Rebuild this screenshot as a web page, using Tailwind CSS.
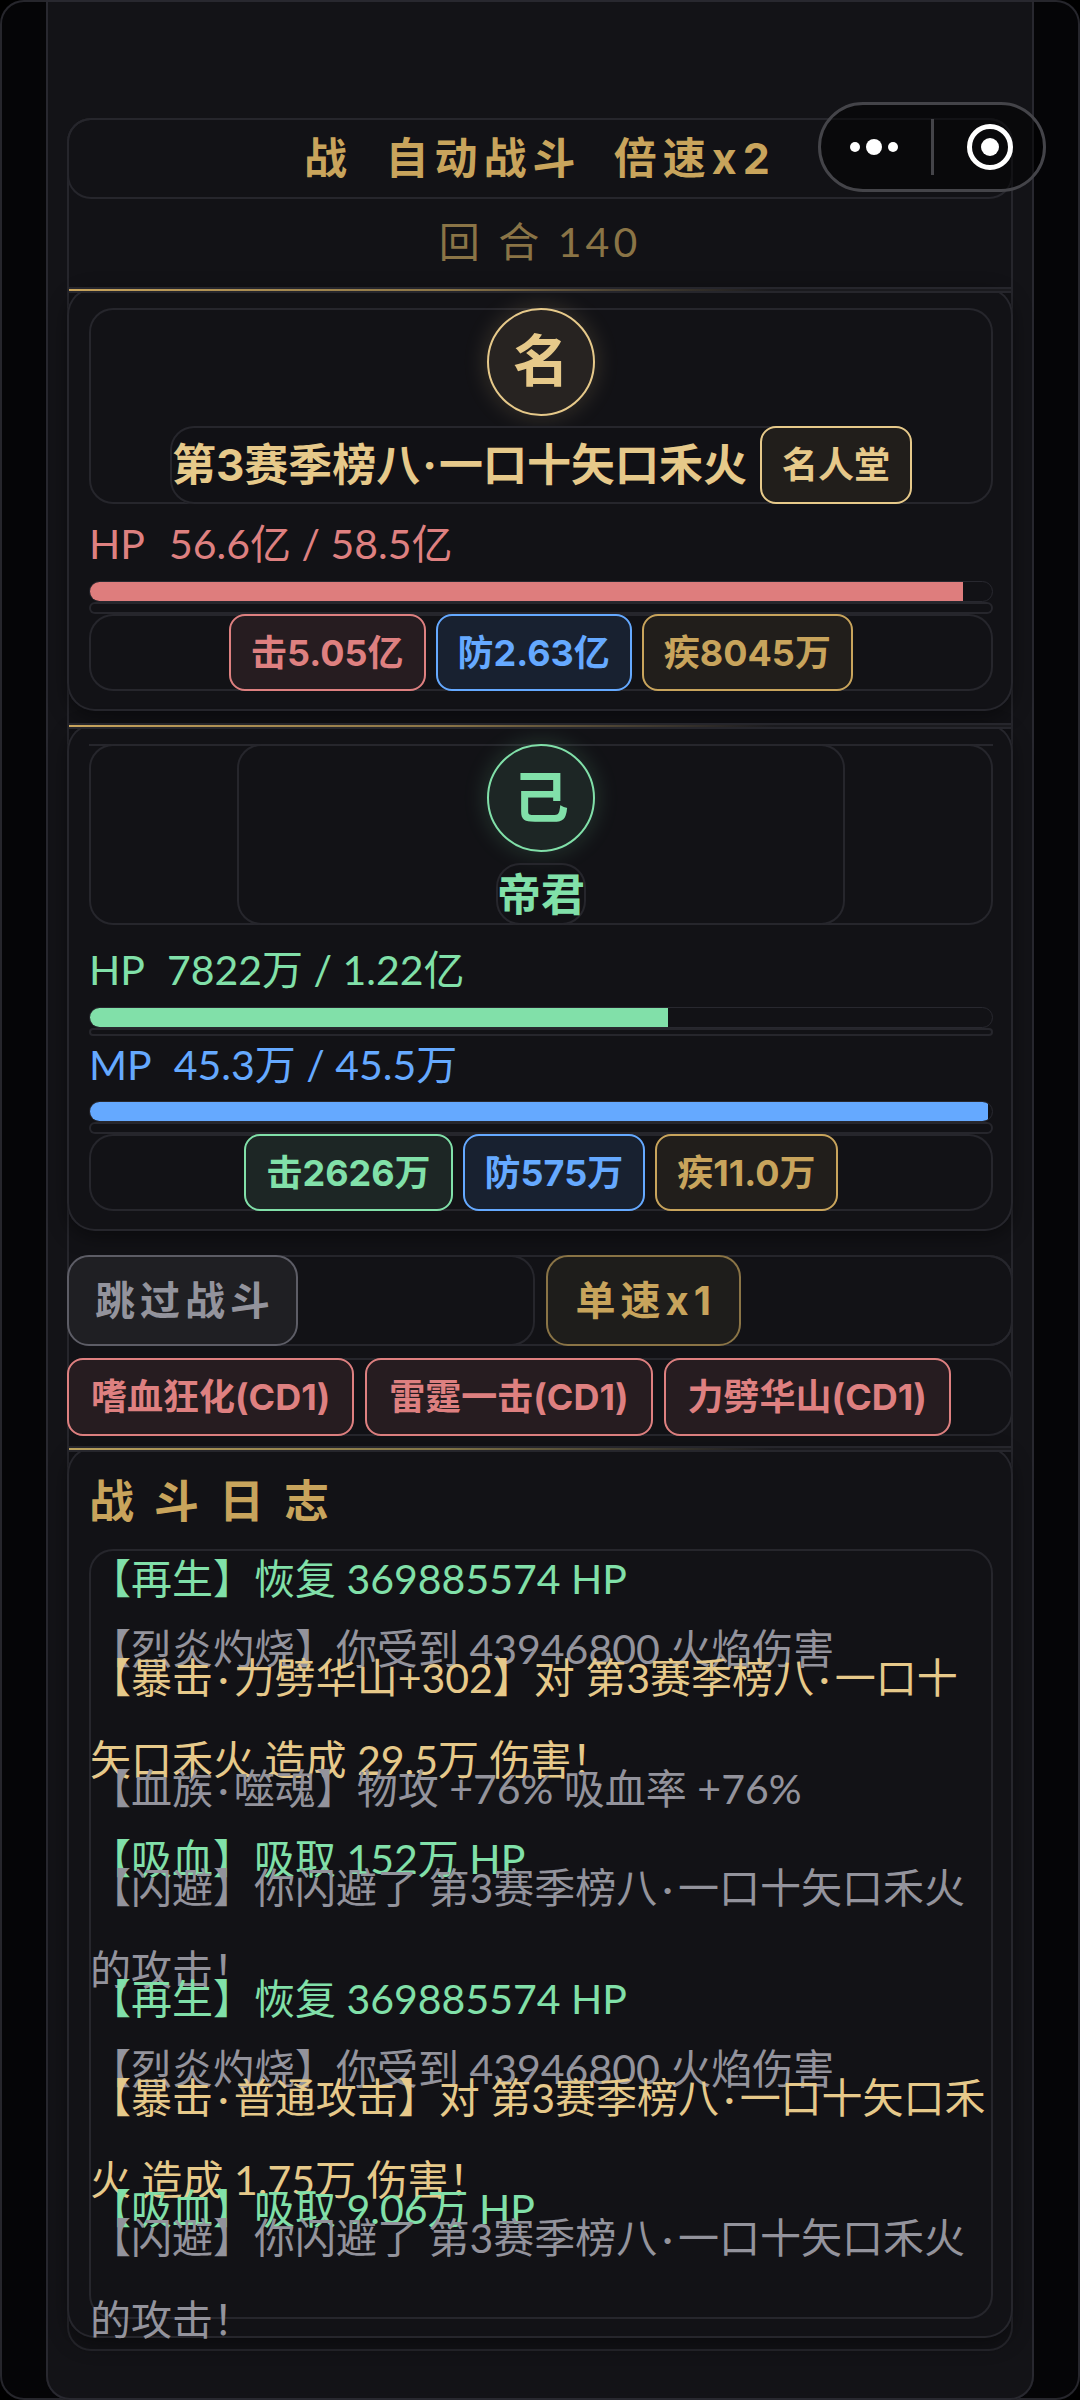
<!DOCTYPE html>
<html lang="zh-CN">
<head>
<meta charset="utf-8">
<meta name="viewport" content="width=device-width, initial-scale=1">
<title>自动战斗</title>
<script src="https://cdn.jsdelivr.net/npm/@tailwindcss/browser@4"></script>
</head>
<body class="bg-black font-['Lato','Noto_Sans_CJK_SC',sans-serif] text-[41px]">
<div class="relative min-h-screen rounded-3xl bg-[#050507] px-[46px] ring-2 ring-inset ring-[#26262c]">
  <main class="min-h-screen rounded-b-3xl bg-[#131317] px-[21px] pt-[118px] pb-[49px] ring-2 ring-inset ring-[#28282f]">
    <div class="rounded-3xl bg-[#121216] pb-[13px] ring-2 ring-inset ring-[#26262c]">

      <h1 class="flex h-[81px] items-center justify-center rounded-3xl font-['Inter','Noto_Sans_CJK_SC',sans-serif] text-[43px] font-bold tracking-[6px] whitespace-pre text-[#c8a45c] ring-2 ring-inset ring-[#26262c]">战  自动战斗  倍速x2</h1>
      <p class="flex h-[88px] items-center justify-center pb-[2px] text-[41px] tracking-[4px] text-[#8a7446]">回 合 140</p>

      <!-- Opponent -->
      <section class="relative rounded-[28px] bg-[#121216] pt-[21px] pr-[20px] pb-[20px] pl-[22px] shadow-[0_6px_20px_rgba(0,0,0,0.4)] ring-2 ring-inset ring-[#26262c]">
        <div class="absolute inset-x-[2px] top-0 h-[6px] border-y-2 border-[#26262c] bg-linear-to-r from-[#c8a45c] via-[#8a7446] via-40% to-[#1a1a1e] to-75%"></div>
        <header class="flex flex-col items-center gap-[10px] rounded-3xl ring-2 ring-inset ring-[#26262c]">
          <div class="flex size-[108px] items-center justify-center rounded-full border-2 border-[#e6c98a] bg-[#272321] pb-1 text-[56px] leading-none font-bold text-[#e6c98a] shadow-[0_0_24px_rgba(230,201,138,0.2)]">名</div>
          <div class="flex items-center gap-[13px] rounded-3xl bg-[#111115] font-['Inter','Noto_Sans_CJK_SC',sans-serif] ring-2 ring-inset ring-[#26262c]">
            <h2 class="pl-[2px] text-[44px] font-bold text-[#e6c98a]">第3赛季榜八<span class="mx-[2px]">·</span>一口十矢口禾火</h2>
            <span class="flex h-[78px] items-center rounded-2xl border-2 border-[#e6c98a] bg-[#211e1b] px-[20px] text-[36px] font-bold text-[#e6c98a]">名人堂</span>
          </div>
        </header>
        <p class="flex h-[77px] items-center gap-[24px] pt-[2px] text-[#de8080]"><span>HP</span><span>56.6亿 / 58.5亿</span></p>
        <div role="progressbar" aria-label="HP" class="h-[21px] overflow-hidden rounded-full border border-[#28282f]"><div class="h-full bg-[#de7d7d]" style="width:96.75%"></div></div>
        <div class="h-[12px] rounded-lg ring-2 ring-inset ring-[#26262c]"></div>
        <div class="flex h-[77px] justify-center gap-[10px] rounded-3xl font-['Inter','Noto_Sans_CJK_SC',sans-serif] text-[36px] font-bold ring-2 ring-inset ring-[#26262c]">
          <span class="flex items-center rounded-2xl border-2 border-[#de8080] bg-[#261c20] px-[20px] text-[#de8080]">击5.05亿</span>
          <span class="flex items-center rounded-2xl border-2 border-[#65a9ff] bg-[#182130] px-[20px] text-[#65a9ff]">防2.63亿</span>
          <span class="flex items-center rounded-2xl border-2 border-[#c8a45c] bg-[#211e1b] px-[20px] text-[#c8a45c]">疾8045万</span>
        </div>
      </section>

      <!-- Player -->
      <section class="relative mt-[12px] rounded-[28px] bg-[#121216] pt-[21px] pr-[20px] pb-[20px] pl-[22px] shadow-[0_6px_20px_rgba(0,0,0,0.4)] ring-2 ring-inset ring-[#26262c]">
        <div class="absolute inset-x-[2px] top-0 h-[6px] border-y-2 border-[#26262c] bg-linear-to-r from-[#c8a45c] via-[#8a7446] via-40% to-[#1a1a1e] to-75%"></div>
        <div class="border-t-2 border-[#26262c]">
          <header class="-mt-[2px] flex justify-center rounded-3xl ring-2 ring-inset ring-[#26262c]">
            <div class="flex flex-col items-center gap-[11px] rounded-3xl px-[250px] ring-2 ring-inset ring-[#26262c]">
              <div class="flex size-[108px] items-center justify-center rounded-full border-2 border-[#81e0a9] bg-[#1d2625] pb-1 text-[56px] leading-none font-bold text-[#81e0a9] shadow-[0_0_24px_rgba(129,224,169,0.2)]">己</div>
              <h2 class="flex h-[62px] items-center rounded-3xl px-px pb-px text-[44px] font-bold text-[#81e0a9] ring-2 ring-inset ring-[#26262c]">帝君</h2>
            </div>
          </header>
        </div>
        <p class="flex h-[82px] items-center gap-[22px] pt-[8px] text-[#81e0a9]"><span>HP</span><span>7822万 / 1.22亿</span></p>
        <div role="progressbar" aria-label="HP" class="h-[21px] overflow-hidden rounded-full border border-[#28282f]"><div class="h-full bg-[#81e0a9]" style="width:64.1%"></div></div>
        <div class="h-[8px] rounded ring-2 ring-inset ring-[#26262c]"></div>
        <p class="flex h-[65px] items-center gap-[22px] pb-[8px] text-[#65a9ff]"><span>MP</span><span>45.3万 / 45.5万</span></p>
        <div role="progressbar" aria-label="MP" class="h-[21px] overflow-hidden rounded-full border border-[#28282f]"><div class="h-full bg-[#65a9ff]" style="width:99.56%"></div></div>
        <div class="h-[12px] rounded-lg ring-2 ring-inset ring-[#26262c]"></div>
        <div class="flex h-[77px] justify-center gap-[10px] rounded-3xl font-['Inter','Noto_Sans_CJK_SC',sans-serif] text-[36px] font-bold ring-2 ring-inset ring-[#26262c]">
          <span class="flex items-center rounded-2xl border-2 border-[#81e0a9] bg-[#1d2625] px-[20px] text-[#81e0a9]">击2626万</span>
          <span class="flex items-center rounded-2xl border-2 border-[#65a9ff] bg-[#182130] px-[20px] text-[#65a9ff]">防575万</span>
          <span class="flex items-center rounded-2xl border-2 border-[#c8a45c] bg-[#211e1b] px-[20px] text-[#c8a45c]">疾11.0万</span>
        </div>
      </section>

      <div class="mt-[24px] grid grid-cols-2 gap-[11px] rounded-3xl font-['Inter','Noto_Sans_CJK_SC',sans-serif] text-[40px] font-bold tracking-[5px] ring-2 ring-inset ring-[#26262c]">
        <div class="flex h-[91px] rounded-3xl ring-2 ring-inset ring-[#26262c]">
          <button type="button" class="rounded-[22px] border-2 border-[#5d5d66] bg-[#1f1f23] pr-[21px] pl-[26px] text-[#93939c]">跳过战斗</button>
        </div>
        <div class="flex h-[91px] rounded-3xl ring-2 ring-inset ring-[#26262c]">
          <button type="button" class="rounded-[22px] border-2 border-[#8a7446] bg-[#1e1d1b] pr-[23px] pl-[28px] text-[#c8a45c]">单速x1</button>
        </div>
      </div>
      <div class="mt-[12px] flex h-[78px] gap-[11px] rounded-3xl font-['Inter','Noto_Sans_CJK_SC',sans-serif] text-[36px] font-bold text-[#de8080] ring-2 ring-inset ring-[#26262c]">
        <button type="button" class="rounded-2xl border-2 border-[#de8080] bg-[#261c20] px-[22px]">嗜血狂化(CD1)</button>
        <button type="button" class="rounded-2xl border-2 border-[#de8080] bg-[#261c20] px-[22px]">雷霆一击(CD1)</button>
        <button type="button" class="rounded-2xl border-2 border-[#de8080] bg-[#261c20] px-[22px]">力劈华山(CD1)</button>
      </div>

      <!-- Battle log -->
      <section class="relative mt-[10px] rounded-[28px] bg-[#121216] pr-[20px] pb-[19px] pl-[22px] shadow-[0_6px_20px_rgba(0,0,0,0.4)] ring-2 ring-inset ring-[#26262c]">
        <div class="absolute inset-x-[2px] top-0 h-[6px] border-y-2 border-[#26262c] bg-linear-to-r from-[#b8a05c] via-[#807446] via-40% to-[#1a1a1e] to-75%"></div>
        <h2 class="flex h-[103px] items-center pt-2 text-[45px] font-bold tracking-[20px] text-[#c8a45c]">战斗日志</h2>
        <ul class="rounded-3xl text-[41px] leading-[82px] ring-2 ring-inset ring-[#26262c] *:flex *:h-[70px] *:items-center *:pr-1 *:pb-[10px] *:pl-px">
          <li class="text-[#81e0a9]"><p>【再生】恢复 369885574 HP</p></li>
          <li class="text-[#93939c]"><p>【烈炎灼烧】你受到 43946800 火焰伤害</p></li>
          <li class="text-[#e6c98a]"><p>【暴击<span class="mx-[5px]">·</span>力劈华山+302】对 第3赛季榜八<span class="mx-[5px]">·</span>一口十矢口禾火 造成 29.5万 伤害！</p></li>
          <li class="text-[#93939c]"><p>【血族<span class="mx-[5px]">·</span>噬魂】物攻 +76% 吸血率 +76%</p></li>
          <li class="text-[#81e0a9]"><p>【吸血】吸取 152万 HP</p></li>
          <li class="text-[#93939c]"><p>【闪避】你闪避了 第3赛季榜八<span class="mx-[5px]">·</span>一口十矢口禾火的攻击！</p></li>
          <li class="text-[#81e0a9]"><p>【再生】恢复 369885574 HP</p></li>
          <li class="text-[#93939c]"><p>【烈炎灼烧】你受到 43946800 火焰伤害</p></li>
          <li class="text-[#e6c98a]"><p>【暴击<span class="mx-[5px]">·</span>普通攻击】对 第3赛季榜八<span class="mx-[5px]">·</span>一口十矢口禾火 造成 1.75万 伤害！</p></li>
          <li class="text-[#81e0a9]"><p>【吸血】吸取 9.06万 HP</p></li>
          <li class="text-[#93939c]"><p>【闪避】你闪避了 第3赛季榜八<span class="mx-[5px]">·</span>一口十矢口禾火的攻击！</p></li>
        </ul>
      </section>
    </div>
  </main>

  <!-- Mini-program capsule, floats above the page -->
  <div class="absolute top-[102px] right-[34px] flex h-[90px] w-[228px] items-center rounded-full border-3 border-[#444449] bg-black/50">
    <button type="button" aria-label="更多" class="flex flex-1 justify-center pr-1"><svg class="h-[16px] w-[48px]" viewBox="0 0 48 16" fill="#fff"><circle cx="5" cy="8" r="5"/><circle cx="24" cy="8" r="8"/><circle cx="43" cy="8" r="5"/></svg></button>
    <span class="h-[56px] w-[3px] bg-[#444449]"></span>
    <button type="button" aria-label="关闭" class="flex flex-1 justify-center pl-1"><svg class="size-[46px]" viewBox="0 0 46 46"><circle cx="23" cy="23" r="20.5" fill="none" stroke="#fff" stroke-width="5"/><circle cx="23" cy="23" r="9" fill="#fff"/></svg></button>
  </div>
</div>
</body>
</html>
